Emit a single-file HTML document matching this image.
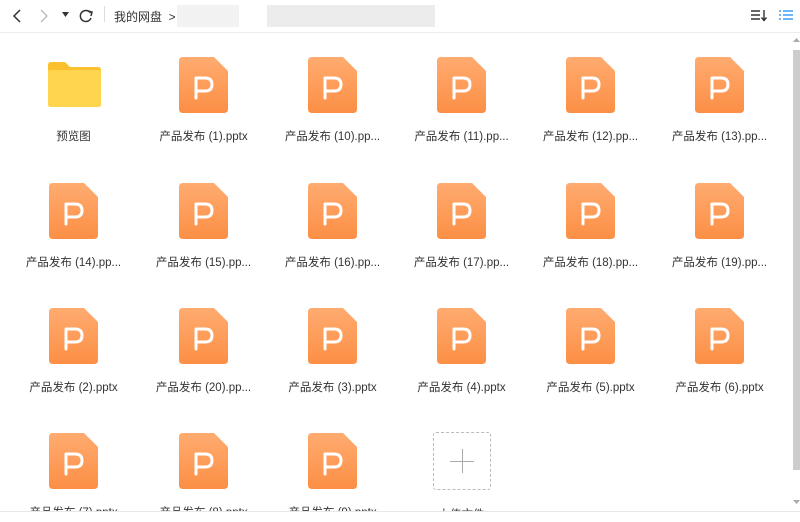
<!DOCTYPE html>
<html><head><meta charset="utf-8"><style>
body{margin:0;width:800px;height:519px;overflow:hidden;background:#fff;font-family:"Liberation Sans","Noto Sans CJK SC",sans-serif;position:relative}
.hdr{position:absolute;left:0;top:0;width:800px;height:32px;border-bottom:1px solid #ececec}
.it{position:absolute;width:129px;text-align:center}
.it svg{display:block;margin:0 auto}
.lb{font-size:11.5px;color:#333;margin-top:15px;white-space:nowrap}
.blur{position:absolute;top:5px;height:22px;background:#efefef}
</style></head><body>
<div class="hdr">
<svg style="position:absolute;left:10px;top:8px" width="14" height="16"><path d="M10 2 L4 8 L10 14" stroke="#333" stroke-width="1.5" fill="none"/></svg>
<svg style="position:absolute;left:37px;top:8px" width="14" height="16"><path d="M4 2 L10 8 L4 14" stroke="#bbb" stroke-width="1.3" fill="none"/></svg>
<svg style="position:absolute;left:62px;top:12px" width="8" height="6"><path d="M0 0 L7 0 L3.5 5Z" fill="#333"/></svg>
<svg style="position:absolute;left:78px;top:8px" width="16" height="16"><path d="M12.5 5 A5.5 5.5 0 1 0 13 10" stroke="#333" stroke-width="1.5" fill="none"/><path d="M10 3 L14 4 L13 8" stroke="#333" stroke-width="1.5" fill="none"/></svg>
<div style="position:absolute;left:104px;top:6px;width:1px;height:16px;background:#ddd"></div>
<div style="position:absolute;left:114px;top:8px;font-size:12px;color:#333">我的网盘 &nbsp;&gt;</div>
<div class="blur" style="left:177px;width:62px;background:#f2f2f2"></div>
<div class="blur" style="left:267px;width:168px;background:#ececec"></div>
<svg style="position:absolute;left:750px;top:8px" width="18" height="14"><path d="M1 3H10M1 7H10M1 11H10" stroke="#333" stroke-width="1.4"/><path d="M14 2V12M11.5 9.5L14 12.5L16.5 9.5" stroke="#333" stroke-width="1.4" fill="none"/></svg>
<svg style="position:absolute;left:778px;top:8px" width="16" height="14"><path d="M1 3H3M5 3H15M1 7H3M5 7H15M1 11H3M5 11H15" stroke="#3a9ff5" stroke-width="1.6"/></svg>
</div>
<div style="position:absolute;left:793px;top:50px;width:7px;height:420px;background:#cdcdcd"></div>
<svg style="position:absolute;left:793px;top:38px" width="7" height="5"><path d="M0 4L3.5 0L7 4Z" fill="#aaa"/></svg>
<svg style="position:absolute;left:793px;top:500px" width="7" height="5"><path d="M0 0L3.5 4L7 0Z" fill="#aaa"/></svg>
<div id="g"></div>
<div style="position:absolute;left:0;top:511px;width:800px;height:8px;background:#fff;border-top:1px solid #e8e8e8"></div>
<script>
var names=["预览图"];
var n=["1","10","11","12","13","14","15","16","17","18","19","2","20","3","4","5","6","7","8","9"];
n.forEach(function(x){names.push("产品发布 ("+x+").pptx")});
var ppt='<svg width="50" height="56" viewBox="0 0 50 56"><defs><linearGradient id="o" x1="0" y1="0" x2="0" y2="1"><stop offset="0" stop-color="#ffab70"/><stop offset="1" stop-color="#fc8f45"/></linearGradient></defs><path d="M4 0H35L49 14V52Q49 56 45 56H4Q0 56 0 52V4Q0 0 4 0Z" fill="url(#o)"/><path d="M17 41V21H26Q33 21 33 27.5Q33 34 26 34H17" stroke="#fff" stroke-width="3" fill="none" stroke-linecap="round" stroke-linejoin="round"/></svg>';
var fold='<svg width="58" height="56" viewBox="0 0 58 56"><path d="M3 8Q3 5 6 5H20L25 10H53Q56 10 56 13V47Q56 50 53 50H6Q3 50 3 47Z" fill="#fbc02d"/><path d="M3 15Q3 13 5 13H54Q56 13 56 15V47Q56 50 53 50H6Q3 50 3 47Z" fill="#ffd54f"/></svg>';
var add='<div style="width:58px;height:58px;margin:0 auto;border:1px dashed #bbb;border-radius:3px;box-sizing:border-box;position:relative;top:-1px"><div style="position:absolute;left:16px;top:28px;width:24px;height:1px;background:#aaa"></div><div style="position:absolute;left:28px;top:16px;width:1px;height:24px;background:#aaa"></div></div>';
var h="";var cx=[73,203,332,461,590,719],ty=[57,183,308,433];
names.push("上传文件");
names.forEach(function(t,i){var r=Math.floor(i/6),c=i%6;var lab=t;
 if(/\(\d\d\)/.test(lab))lab=lab.replace("pptx","pp...");
 var ic=i==0?fold:(i==names.length-1?add:ppt);
 h+='<div class="it" style="left:'+(cx[c]-64)+'px;top:'+ty[r]+'px">'+ic+'<div class="lb">'+lab+'</div></div>';});
document.getElementById("g").innerHTML=h;
</script>
</body></html>
